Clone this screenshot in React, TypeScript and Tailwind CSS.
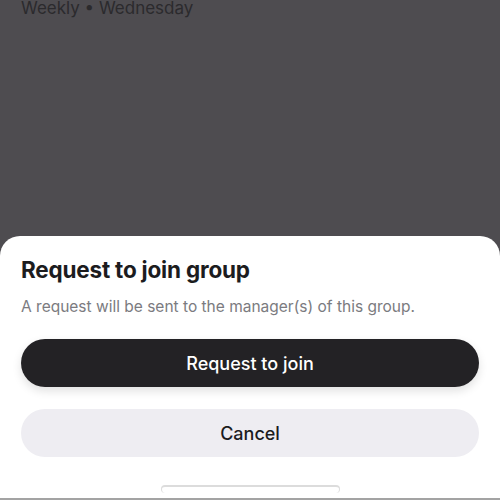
const font = { fontFamily: 'Inter, "Noto Sans", sans-serif' };

const App = () => {
  return (
    <div className="w-[500px] h-[500px] flex flex-col bg-[#4e4c50] overflow-hidden" style={font}>
      <div className="flex-1 overflow-hidden px-[21px]">
        <div className="-mt-[4px] text-[17px] leading-[24px] text-[#2b2a2d]">Weekly • Wednesday</div>
      </div>
      <div className="h-[262px] bg-white rounded-t-[20px] flex flex-col px-[21px] pt-[20px]">
        <h2 className="text-[22.5px] leading-[28px] font-bold text-[#1c1c1e] tracking-[-0.2px]">Request to join group</h2>
        <p className="mt-[13px] text-[15.5px] leading-[20px] text-[#7b7b80]">A request will be sent to the manager(s) of this group.</p>
        <button className="mt-[22px] h-[48px] w-full rounded-full bg-[#232225] text-white text-[18px] font-medium shadow-[0_4px_10px_rgba(0,0,0,0.12)]">
          Request to join
        </button>
        <button className="mt-[22px] h-[48px] w-full rounded-full bg-[#eeedf2] text-[#1c1c1e] text-[18px] font-medium">
          Cancel
        </button>
        <div className="flex-1 flex justify-center items-end">
          <div className="w-[179px] h-[8px] mb-[5px] rounded-full border-t-2 border-x border-[#dcdcdc]" />
        </div>
      </div>
      <div className="h-[2px] bg-[#a3a3a3]" />
    </div>
  );
};

export default App;
